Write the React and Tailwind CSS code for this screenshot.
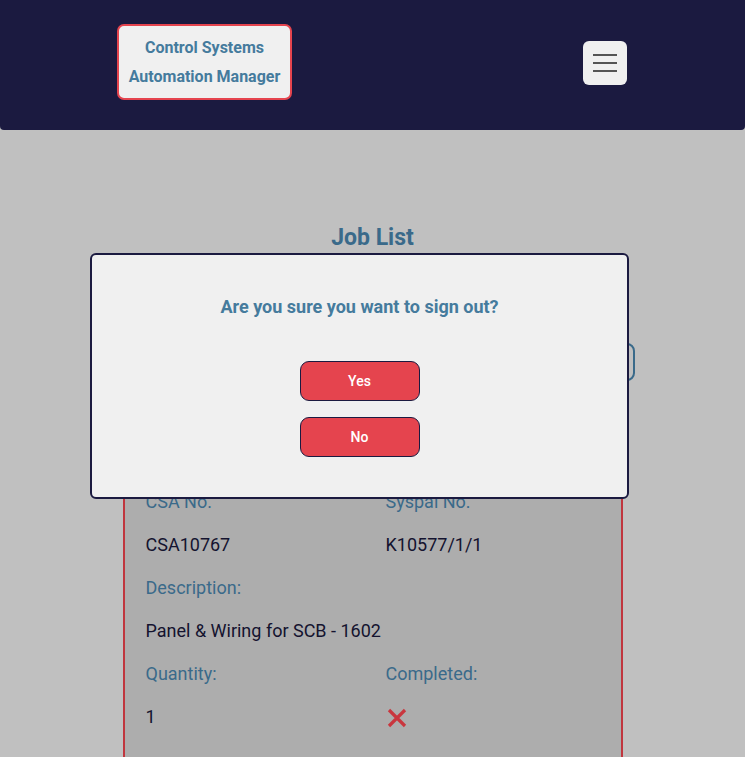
import { useState } from "react";

const rows = [
  [
    { label: "CSA No.", value: "CSA10767" },
    { label: "Syspal No.", value: "K10577/1/1" },
  ],
  [{ label: "Description:", value: "Panel & Wiring for SCB - 1602" }],
];

export default function App() {
  const [showSignOut, setShowSignOut] = useState(true);

  return (
    <div className="relative min-h-[757px] bg-[#c0c0c0] font-['Roboto',sans-serif] overflow-hidden">
      <nav className="relative z-20 h-[130px] bg-[#1b1a40] rounded-b-[4px] flex items-center justify-between pl-[117px] pr-[118px] pb-[6px]">
        <div className="w-[175px] h-[76px] bg-[#f0f0f0] border-2 border-[#e5444e] rounded-[7px] flex flex-col items-center justify-center text-[#457b9d] font-bold text-[16px] leading-[29px]">
          <span>Control Systems</span>
          <span>Automation Manager</span>
        </div>
        <button
          onClick={() => setShowSignOut(true)}
          className="w-[44px] h-[44px] bg-[#f0f0f0] rounded-[6px] flex flex-col items-center justify-center gap-[6px] mt-[2px]"
        >
          <span className="block w-[24px] h-[2px] bg-[#555555]" />
          <span className="block w-[24px] h-[2px] bg-[#555555]" />
          <span className="block w-[24px] h-[2px] bg-[#555555]" />
        </button>
      </nav>

      <main className="flex flex-col items-center pt-[93px]">
        <h1 className="text-[23px] font-bold text-[#3a6a8a] leading-[30px]">Job List</h1>
        <div className="mt-[90px] w-[525px] h-[38px] border-2 border-[#3a6a8a] rounded-[8px] self-end mr-[110px]" />
        <div className="mt-[77px] w-[500px] border-2 border-[#c0363e] bg-[#adadad] pl-[21px] pr-[20px] pt-[20px] pb-[40px]">
          {rows.map((row, i) => (
            <div key={i} className="grid grid-cols-[240px_1fr]">
              {row.map((f) => (
                <div key={f.label} className={row.length === 1 ? "col-span-2" : ""}>
                  <div className="h-[43px] flex items-center text-[18px] text-[#3a6a8a]">{f.label}</div>
                  <div className="h-[43px] flex items-center text-[18px] text-[#14132f]">{f.value}</div>
                </div>
              ))}
            </div>
          ))}
          <div className="grid grid-cols-[240px_1fr]">
            <div>
              <div className="h-[43px] flex items-center text-[18px] text-[#3a6a8a]">Quantity:</div>
              <div className="h-[43px] flex items-center text-[18px] text-[#14132f]">1</div>
            </div>
            <div>
              <div className="h-[43px] flex items-center text-[18px] text-[#3a6a8a]">Completed:</div>
              <div className="h-[43px] flex items-center">
                <svg width="20" height="20" viewBox="0 0 20 20" className="ml-[1px] mt-[3px]">
                  <path d="M2 2L18 18M18 2L2 18" stroke="#c9363e" strokeWidth="3.2" />
                </svg>
              </div>
            </div>
          </div>
        </div>
      </main>

      {showSignOut && (
        <div className="absolute z-10 left-[90px] top-[253px] w-[539px] h-[246px] bg-[#f0f0f0] border-2 border-[#1b1a40] rounded-[6px] flex flex-col items-center pt-[40px]">
          <p className="text-[18px] font-bold text-[#457b9d] leading-[24px]">Are you sure you want to sign out?</p>
          <button
            onClick={() => setShowSignOut(false)}
            className="mt-[42px] w-[120px] h-[40px] bg-[#e5444e] border border-[#1b1a40] rounded-[9px] text-white text-[14px] font-medium"
          >
            Yes
          </button>
          <button
            onClick={() => setShowSignOut(false)}
            className="mt-[16px] w-[120px] h-[40px] bg-[#e5444e] border border-[#1b1a40] rounded-[9px] text-white text-[14px] font-medium"
          >
            No
          </button>
        </div>
      )}
    </div>
  );
}
